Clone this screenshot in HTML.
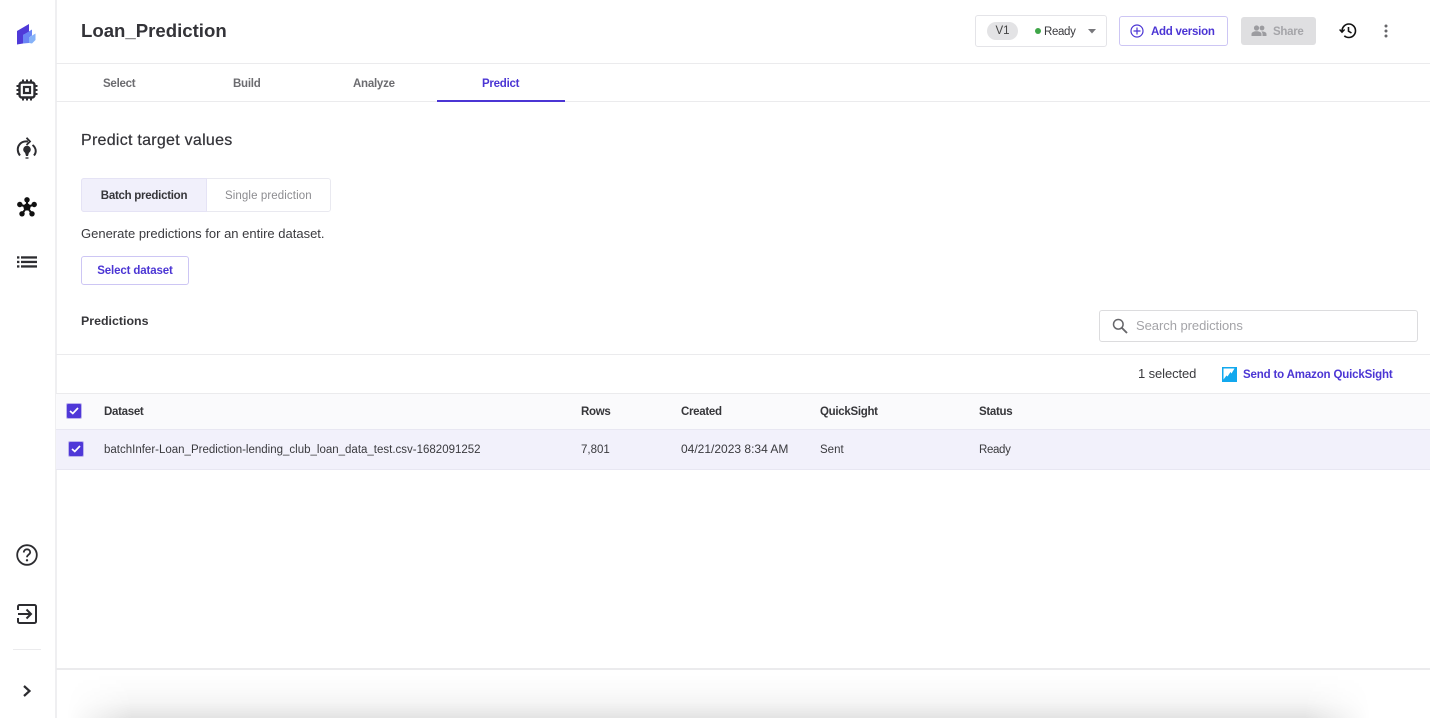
<!DOCTYPE html>
<html lang="en">
<head>
<meta charset="utf-8">
<title>Loan_Prediction</title>
<style>
html,body{margin:0;padding:0;background:#fff;overflow:hidden}
body{width:1430px;height:718px;position:relative;font-family:"Liberation Sans",sans-serif;color:#333}
.a{position:absolute;white-space:nowrap}
.line{position:absolute;background:#ebebed}
svg{position:absolute;display:block}
.th{font-size:11.500px;letter-spacing:-.3px;font-weight:700;color:#36363a;top:405px;line-height:14px}
.td{font-size:11.500px;color:#3a3a3e;top:443px;line-height:14px}
.tab{font-size:11.500px;letter-spacing:-.25px;line-height:14px;font-weight:700;top:77px;color:#6c6c70}
.purple{color:#4b35d4}
.cb{position:absolute;width:14px;height:14px;background:#4f38d8;border-radius:2px;border:1px solid #bdb4ee}
</style>
</head>
<body>

<!-- Bottom shadow -->
<div class="a" style="left:57px;top:674px;width:1373px;height:44px;background:linear-gradient(to bottom,rgba(0,0,0,0) 0%,rgba(0,0,0,.015) 35%,rgba(0,0,0,.04) 65%,rgba(0,0,0,.11) 100%);-webkit-mask-image:linear-gradient(to right,transparent 10px,#000 75px,#000 1248px,transparent 1313px);mask-image:linear-gradient(to right,transparent 10px,#000 75px,#000 1248px,transparent 1313px)"></div>

<!-- Sidebar -->
<div class="line" style="left:55px;top:0;width:1.500px;height:718px;background:#efeff1"></div>
<svg style="left:16px;top:23px" width="22" height="24" viewBox="0 0 22 24">
  <path d="M1 8L13 1V9L7 12V20.500L1 21.500Z" fill="#4f3ad8"/>
  <path d="M7 12L16 6.500V12.500L13 14.500V20L7 20.500Z" fill="#6a84f5"/>
  <path d="M13 14.500L19.500 10.500V17L16 20.500L13 20Z" fill="#86b2f8"/>
</svg>
<svg style="left:16px;top:79px" width="22" height="22" viewBox="0 0 22 22" fill="none" stroke="#2c2c30">
  <rect x="3.500" y="3.500" width="15" height="15" rx="2.500" stroke-width="2.400"/>
  <rect x="8" y="8" width="6" height="6" stroke-width="2.200"/>
  <path d="M7 0.500V3M11 0.500V3M15 0.500V3M7 19V21.500M11 19V21.500M15 19V21.500M0.500 7H3M0.500 11H3M0.500 15H3M19 7H21.500M19 11H21.500M19 15H21.500" stroke-width="2"/>
</svg>
<svg style="left:16px;top:137px" width="22" height="24" viewBox="0 0 22 24" fill="none" stroke="#2c2c30">
  <path d="M4 18.500C1.500 15.500 0.800 11 3.500 7.500C5.500 5 8.500 4 12 4.500" stroke-width="2"/>
  <path d="M10.500 0.800L14 4.500L10.500 8" stroke-width="1.800"/>
  <path d="M16.500 8C19.800 10.500 21 15 18 18.500" stroke-width="2"/>
  <circle cx="11" cy="12.500" r="3.800" fill="#2c2c30" stroke="none"/>
  <path d="M9 15.500H13L12 19H10Z" fill="#2c2c30" stroke="none"/>
  <path d="M9.500 21H12.500" stroke-width="1.300"/>
</svg>
<svg style="left:17px;top:197px" width="20" height="20" viewBox="0 0 20 20" fill="#111">
  <circle cx="10" cy="10" r="3.600"/>
  <circle cx="10" cy="2.800" r="2.700"/>
  <circle cx="2.800" cy="7.500" r="2.700"/>
  <circle cx="17.200" cy="7.500" r="2.700"/>
  <circle cx="5" cy="16.800" r="2.700"/>
  <circle cx="15" cy="16.800" r="2.700"/>
  <path d="M10 10L10 2.800M10 10L2.800 7.500M10 10L17.200 7.500M10 10L5 16.800M10 10L15 16.800" stroke="#111" stroke-width="2"/>
</svg>
<svg style="left:17px;top:256px" width="20" height="12" viewBox="0 0 20 12" fill="#2c2c30">
  <rect x="0" y="0.300" width="2.400" height="2.300"/><rect x="4" y="0.300" width="16" height="2.300"/>
  <rect x="0" y="4.800" width="2.400" height="2.300"/><rect x="4" y="4.800" width="16" height="2.300"/>
  <rect x="0" y="9.300" width="2.400" height="2.300"/><rect x="4" y="9.300" width="16" height="2.300"/>
</svg>
<svg style="left:16px;top:544px" width="22" height="22" viewBox="0 0 22 22" fill="none" stroke="#2c2c30">
  <circle cx="11" cy="11" r="9.800" stroke-width="1.800"/>
  <path d="M7.800 8.500C7.800 6.500 9.300 5.300 11 5.300C12.800 5.300 14.200 6.500 14.200 8.200C14.200 10.500 11 10.700 11 13.300" stroke-width="1.800"/>
  <circle cx="11" cy="16.300" r="1.200" fill="#2c2c30" stroke="none"/>
</svg>
<svg style="left:17px;top:604px" width="20" height="20" viewBox="0 0 20 20" fill="none" stroke="#2c2c30" stroke-width="2">
  <path d="M1 6V2.500C1 1.700 1.700 1 2.500 1H17.500C18.300 1 19 1.700 19 2.500V17.500C19 18.300 18.300 19 17.500 19H2.500C1.700 19 1 18.300 1 17.500V14"/>
  <path d="M1 10H13.500M9.500 5.500L14 10L9.500 14.500"/>
</svg>
<div class="line" style="left:13px;top:649px;width:28px;height:1px"></div>
<svg style="left:22px;top:685px" width="10" height="12" viewBox="0 0 10 12" fill="none" stroke="#2c2c30" stroke-width="2.200">
  <path d="M2 1L7.500 6L2 11"/>
</svg>

<!-- Header -->
<div class="a" style="left:81px;top:19px;font-size:18.600px;line-height:24px;font-weight:700;color:#333338">Loan_Prediction</div>

<div class="a" style="left:975px;top:15px;width:130px;height:30px;border:1px solid #e4e4e8;border-radius:3px"></div>
<div class="a" style="left:987px;top:22px;width:31px;height:18px;background:#e3e3e5;border-radius:9px;font-size:11.500px;line-height:19px;text-align:center;color:#444">V1</div>
<div class="a" style="left:1035px;top:28px;width:6px;height:6px;border-radius:50%;background:#3fa648"></div>
<div class="a" style="left:1044px;top:25px;font-size:11.500px;letter-spacing:-.35px;line-height:14px;color:#3a3a3e">Ready</div>
<svg style="left:1088px;top:29px" width="8" height="5" viewBox="0 0 8 5"><path d="M0 0H8L4 4.500Z" fill="#77777b"/></svg>

<div class="a" style="left:1119px;top:16px;width:107px;height:28px;border:1px solid #cdc6f4;border-radius:3px"></div>
<svg style="left:1130px;top:24px" width="14" height="14" viewBox="0 0 14 14" fill="none" stroke="#4b35d4" stroke-width="1.200">
  <circle cx="7" cy="7" r="6"/><path d="M7 3.500V10.500M3.500 7H10.500"/>
</svg>
<div class="a purple" style="left:1151px;top:25px;font-size:11.500px;letter-spacing:-.26px;line-height:14px;font-weight:700">Add version</div>

<div class="a" style="left:1241px;top:17px;width:75px;height:28px;background:#dfdfe1;border-radius:3px"></div>
<svg style="left:1251px;top:25px" width="16" height="12" viewBox="0 0 16 12" fill="#9c9ca0">
  <circle cx="5.500" cy="3" r="2.600"/><circle cx="11" cy="3" r="2.400"/>
  <path d="M0.500 11V9C0.500 7.300 3 6.300 5.500 6.300C8 6.300 10.500 7.300 10.500 9V11Z"/>
  <path d="M11.500 11V8.800C11.500 8 11 7.200 10.300 6.500C12.700 6.200 15.500 7.200 15.500 9V11Z"/>
</svg>
<div class="a" style="left:1273px;top:25px;font-size:11.500px;letter-spacing:-.3px;line-height:14px;font-weight:700;color:#a5a5a9">Share</div>

<svg style="left:1339px;top:22px" width="18" height="18" viewBox="0 0 18 18" fill="none" stroke="#111" stroke-width="1.600">
  <path d="M3 9.500C2.900 5.300 6 2 9.800 2C13.500 2 16.500 5 16.500 8.800C16.500 12.600 13.500 15.500 9.800 15.500C8 15.500 6.500 14.900 5.300 13.800"/>
  <path d="M0.600 7.500L3 10.200L5.600 7.500" stroke-width="1.400"/>
  <path d="M9.500 5V9.200L12.500 11"/>
</svg>
<svg style="left:1384px;top:24px" width="4" height="14" viewBox="0 0 4 14" fill="#66666a">
  <circle cx="2" cy="2" r="1.500"/><circle cx="2" cy="7" r="1.500"/><circle cx="2" cy="12" r="1.500"/>
</svg>

<div class="line" style="left:56px;top:63px;width:1374px;height:1px"></div>

<!-- Tabs -->
<div class="a tab" style="left:103px">Select</div>
<div class="a tab" style="left:233px">Build</div>
<div class="a tab" style="left:353px">Analyze</div>
<div class="a tab purple" style="left:482px;color:#4b35d4">Predict</div>
<div class="line" style="left:56px;top:101px;width:1374px;height:1px"></div>
<div class="a" style="left:437px;top:100px;width:128px;height:2px;background:#4b35d4"></div>

<!-- Content -->
<div class="a" style="left:81px;top:131px;font-size:16px;line-height:19px;color:#333338;letter-spacing:.27px;-webkit-text-stroke:.2px #333338">Predict target values</div>

<div class="a" style="left:81px;top:178px;width:248px;height:32px;border:1px solid #e9e9f0;border-radius:3px"></div>
<div class="a" style="left:81px;top:178px;width:124px;height:32px;background:#f1f0fb;border:1px solid #e5e3f5;border-radius:3px 0 0 3px;font-size:11.500px;letter-spacing:-.27px;line-height:34px;text-align:center;font-weight:700;color:#36363a">Batch prediction</div>
<div class="a" style="left:225px;top:189px;font-size:11.500px;line-height:14px;color:#8c8c90;letter-spacing:.1px">Single prediction</div>

<div class="a" style="left:81px;top:226px;font-size:13px;line-height:15px;color:#3a3a3e">Generate predictions for an entire dataset.</div>

<div class="a" style="left:81px;top:256px;width:106px;height:27px;border:1px solid #cdc6f4;border-radius:3px;font-size:11.500px;line-height:29px;text-align:center;font-weight:700;color:#4b35d4;letter-spacing:-.13px">Select dataset</div>

<div class="a" style="left:81px;top:314px;font-size:12.400px;line-height:15px;font-weight:700;color:#36363a">Predictions</div>

<div class="a" style="left:1099px;top:310px;width:317px;height:30px;border:1px solid #dcdcde;border-radius:3px"></div>
<svg style="left:1112px;top:318px" width="16" height="16" viewBox="0 0 16 16" fill="none" stroke="#66666a" stroke-width="1.500">
  <circle cx="6.300" cy="6.300" r="4.800"/><path d="M10 10L15 15" stroke-width="1.900"/>
</svg>
<div class="a" style="left:1136px;top:318px;font-size:13px;line-height:16px;color:#a4a4a8;letter-spacing:-.05px">Search predictions</div>

<div class="line" style="left:56px;top:354px;width:1374px;height:1px"></div>

<div class="a" style="left:1138px;top:366px;font-size:13px;line-height:16px;color:#3a3a3e;letter-spacing:-.1px">1 selected</div>
<svg style="left:1222px;top:367px" width="15" height="15" viewBox="0 0 15 15">
  <rect width="15" height="15" fill="#12a8ee"/>
  <path d="M1.500 1.500H12.500L9.500 6.500L8.500 5L5.500 9.500L4.500 8.500L1.500 12.500Z" fill="#fff"/>
</svg>
<div class="a purple" style="left:1243px;top:368px;font-size:11.500px;letter-spacing:-.16px;line-height:14px;font-weight:700">Send to Amazon QuickSight</div>

<!-- Table -->
<div class="a" style="left:56px;top:393px;width:1374px;height:35px;background:#fafafc;border-top:1px solid #ebebed"></div>
<div class="a" style="left:56px;top:429px;width:1374px;height:39px;background:#f2f1fb;border-top:1px solid #e8e7f2;border-bottom:1px solid #e8e7f2"></div>

<div class="cb" style="left:66px;top:403px"></div>
<svg style="left:69px;top:407px" width="10" height="8" viewBox="0 0 10 8" fill="none" stroke="#fff" stroke-width="1.700"><path d="M1 4L3.800 6.500L9 1"/></svg>
<div class="cb" style="left:68px;top:441px"></div>
<svg style="left:71px;top:445px" width="10" height="8" viewBox="0 0 10 8" fill="none" stroke="#fff" stroke-width="1.700"><path d="M1 4L3.800 6.500L9 1"/></svg>

<div class="a th" style="left:104px">Dataset</div>
<div class="a th" style="left:581px">Rows</div>
<div class="a th" style="left:681px">Created</div>
<div class="a th" style="left:820px">QuickSight</div>
<div class="a th" style="left:979px">Status</div>

<div class="a td" style="left:104px">batchInfer-Loan_Prediction-lending_club_loan_data_test.csv-1682091252</div>
<div class="a td" style="left:581px">7,801</div>
<div class="a td" style="left:681px;top:442px;font-size:12px">04/21/2023 8:34 AM</div>
<div class="a td" style="left:820px">Sent</div>
<div class="a td" style="left:979px;letter-spacing:-.35px">Ready</div>

<div class="line" style="left:56px;top:668px;width:1374px;height:2px;background:#ebebed"></div>

</body>
</html>
